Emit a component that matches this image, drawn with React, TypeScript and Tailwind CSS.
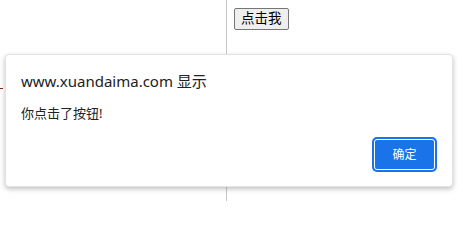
export default function App() {
  return (
    <div className="relative h-[201px] w-[463px] overflow-hidden bg-white font-['Noto_Sans','Noto_Sans_CJK_SC',sans-serif]">
      {/* page behind the alert */}
      <div className="flex h-full">
        <div className="relative w-[227px] border-r border-[#c8c8c8]">
          <div className="absolute left-0 top-[88px] h-px w-[3px] bg-[#7a2a2a]" />
        </div>
        <div className="pl-[7px] pt-[5px]">
          <button className="h-[22px] rounded-[2px] border border-[#767676] bg-[#efefef] px-[6px] text-[13.5px] leading-none text-black">
            点击我
          </button>
        </div>
      </div>

      {/* alert dialog */}
      <div className="absolute left-[5px] top-[54px] flex h-[133px] w-[448px] flex-col rounded-[4px] border border-[#e3e3e3] bg-white px-[15px] pt-[16px] shadow-[0_2px_5px_rgba(0,0,0,0.25)]">
        <div className="text-[15px] leading-[20px] text-[#202124]">www.xuandaima.com 显示</div>
        <div className="mt-[13px] text-[13px] leading-[18px] text-[#202124]">你点击了按钮!</div>
        <div className="mt-auto flex justify-end pb-[14px]">
          <button className="h-[35px] w-[65px] rounded-[5px] bg-[#1a73e8] p-[2px]">
            <span className="flex h-full w-full items-center justify-center rounded-[3px] border border-white text-[12px] text-white">
              确定
            </span>
          </button>
        </div>
      </div>
    </div>
  );
}
